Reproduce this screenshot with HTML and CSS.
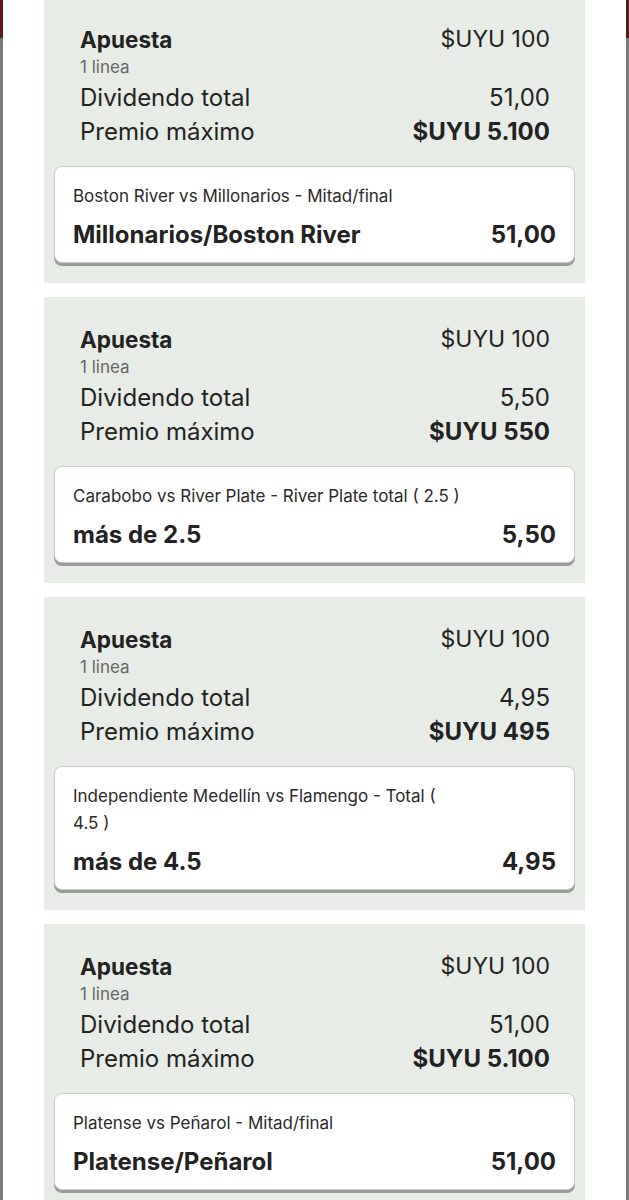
FILE: index.html
```html
<!DOCTYPE html>
<html lang="es">
<head>
<meta charset="utf-8">
<title>Apuestas</title>
<link rel="stylesheet" href="styles.css">
</head>
<body>
<div class="frame">
  <div class="edge"></div>
  <main class="list">
    <section class="bet">
      <div class="row head"><span class="label">Apuesta</span><span class="val">$UYU 100</span></div>
      <div class="lines">1 linea</div>
      <div class="row big"><span>Dividendo total</span><span>51,00</span></div>
      <div class="row big prize"><span>Premio máximo</span><span class="strong">$UYU 5.100</span></div>
      <div class="sel">
        <div class="event">Boston River vs Millonarios - Mitad/final</div>
        <div class="pick"><span>Millonarios/Boston River</span><span>51,00</span></div>
      </div>
    </section>
    <section class="bet">
      <div class="row head"><span class="label">Apuesta</span><span class="val">$UYU 100</span></div>
      <div class="lines">1 linea</div>
      <div class="row big"><span>Dividendo total</span><span>5,50</span></div>
      <div class="row big prize"><span>Premio máximo</span><span class="strong">$UYU 550</span></div>
      <div class="sel">
        <div class="event">Carabobo vs River Plate - River Plate total ( 2.5&nbsp;)</div>
        <div class="pick"><span>más de 2.5</span><span>5,50</span></div>
      </div>
    </section>
    <section class="bet">
      <div class="row head"><span class="label">Apuesta</span><span class="val">$UYU 100</span></div>
      <div class="lines">1 linea</div>
      <div class="row big"><span>Dividendo total</span><span>4,95</span></div>
      <div class="row big prize"><span>Premio máximo</span><span class="strong">$UYU 495</span></div>
      <div class="sel">
        <div class="event">Independiente Medellín vs Flamengo - Total ( 4.5&nbsp;)</div>
        <div class="pick"><span>más de 4.5</span><span>4,95</span></div>
      </div>
    </section>
    <section class="bet">
      <div class="row head"><span class="label">Apuesta</span><span class="val">$UYU 100</span></div>
      <div class="lines">1 linea</div>
      <div class="row big"><span>Dividendo total</span><span>51,00</span></div>
      <div class="row big prize"><span>Premio máximo</span><span class="strong">$UYU 5.100</span></div>
      <div class="sel">
        <div class="event">Platense vs Peñarol - Mitad/final</div>
        <div class="pick"><span>Platense/Peñarol</span><span>51,00</span></div>
      </div>
    </section>
  </main>
  <div class="edge"></div>
</div>
</body>
</html>
```
FILE: styles.css
```css
* { box-sizing: border-box; }
html, body { margin: 0; padding: 0; background: #fff; }
body {
  font-family: Inter, "Noto Sans", "Liberation Sans", sans-serif;
  color: #222;
  height: 1200px;
  overflow: hidden;
}
.frame {
  display: grid;
  grid-template-columns: 3px 1fr 3px;
  min-height: 1200px;
}
.edge {
  background: linear-gradient(to bottom, #5a1a1f 0, #5a1a1f 38px, #7a7a7a 38px, #7a7a7a 100%);
}
.list {
  display: flex;
  flex-direction: column;
  gap: 14px;
  padding: 0 41px;
  margin-top: -3px;
}
.bet {
  background: #e7ede6;
  padding: 28px 35px 20px 36px;
}
.row {
  display: flex;
  justify-content: space-between;
  align-items: center;
}
.head { height: 28px; }
.head .label { font-size: 22.5px; font-weight: 700; }
.head .val { font-size: 23px; }
.lines { font-size: 17px; color: #666; line-height: 28px; height: 28px; }
.big { font-size: 24px; height: 32px; }
.prize { height: 36px; }
.strong { font-weight: 700; }
.sel {
  margin: 17px -25px 0 -26px;
  background: #fff;
  border: 1px solid #c9cbc9;
  border-radius: 8px;
  box-shadow: 0 3px 0 #9a9c9a;
  padding: 16px 18px 13px 18px;
}
.event {
  font-size: 17px;
  line-height: 27px;
  color: #2a2a2a;
  padding-right: 88px;
}
.pick {
  display: flex;
  justify-content: space-between;
  align-items: center;
  margin-top: 9px;
  height: 30px;
  font-size: 24px;
  font-weight: 700;
}
```
